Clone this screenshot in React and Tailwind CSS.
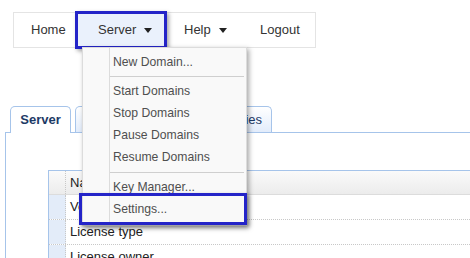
export default function App() {
  const caret = (
    <span className="inline-block w-0 h-0 border-l-[4px] border-r-[4px] border-t-[5px] border-l-transparent border-r-transparent border-t-[#222]" />
  );
  const item = "h-[22px] flex items-center pl-[30px]";
  return (
    <div className="relative w-[470px] h-[258px] overflow-hidden bg-white font-['Liberation_Sans',Arial,sans-serif]">
      {/* Nav bar */}
      <nav className="ml-[13px] mt-[12px] w-[303px] h-[36px] border border-[#e4e4e4] flex items-stretch text-[13px] text-[#333]">
        <div className="w-[61px] pl-[17px] flex items-center">Home</div>
        <div className="relative w-[92px] flex items-center">
          <span className="absolute left-0 top-[-2px] w-[92px] h-[38px] border-[3px] border-[#2424c8] bg-[#eaf1fc] shadow-[2px_2px_4px_rgba(0,0,0,0.35)]" />
          <span className="relative pl-[23px] flex items-center gap-[8px]">
            Server {caret}
          </span>
        </div>
        <div className="w-[76px] pl-[17px] flex items-center gap-[8px]">
          Help {caret}
        </div>
        <div className="pl-[17px] flex items-center">Logout</div>
      </nav>

      {/* Tabs + panel */}
      <div className="ml-[5px] mt-[58px]">
        <div className="flex items-end gap-[4px] pl-[5px] h-[27px] border-b border-[#a6c4ea]">
          <div className="w-[61px] h-[27px] -mb-px bg-white border border-b-0 border-[#a6c4ea] rounded-t-[5px] flex items-center justify-center text-[13px] font-bold text-[#1d3a66]">
            Server
          </div>
          <div className="w-[84px] h-[26px] bg-gradient-to-b from-white to-[#e2ecfb] border border-b-0 border-[#a6c4ea] rounded-t-[5px] flex items-center justify-center text-[13px] text-[#1d3a66]">
            Domains
          </div>
          <div className="w-[109px] h-[26px] bg-gradient-to-b from-white to-[#e2ecfb] border border-b-0 border-[#a6c4ea] rounded-t-[5px] flex items-center justify-end pr-[9px] text-[13px] text-[#1d3a66]">
            Properties
          </div>
        </div>
        <div className="border-l border-[#a6c4ea] h-[130px] pl-[42px] pt-[37px]">
          <div className="border-l border-[#a6c4ea] text-[13px] text-[#222]">
            <div className="flex h-[25px] border-t border-b border-t-[#a6c4ea] border-b-[#dcdcdc] bg-gradient-to-b from-[#fafafa] to-[#ececec]">
              <div className="w-[17px] border-r border-dotted border-[#c8c8c8]" />
              <div className="pl-[4px] flex items-center">Name</div>
            </div>
            {["Version", "License type", "License owner"].map((t) => (
              <div key={t} className="flex h-[25px] border-b border-dotted border-[#c8c8c8]">
                <div className="w-[17px] bg-[#e3ecf9] border-r border-dotted border-[#c8c8c8]" />
                <div className="pl-[4px] flex items-center">{t}</div>
              </div>
            ))}
          </div>
        </div>
      </div>

      {/* Dropdown menu */}
      <div className="absolute left-[82px] top-[47px] w-[165px] bg-[#f9f9f9] border border-[#dcdcdc] shadow-[2px_2px_5px_rgba(0,0,0,0.35)] text-[12.2px] text-[#4f4f4f] pt-[3px] pb-[5px]">
        <div className="absolute left-[26px] top-0 bottom-0 w-px bg-[#dcdcdc]" />
        <div className={item}>New Domain...</div>
        <div className="h-[7px] pt-[3px] pl-[27px] pr-[2px]">
          <div className="h-px bg-[#cfcfcf]" />
        </div>
        <div className={item}>Start Domains</div>
        <div className={item}>Stop Domains</div>
        <div className={item}>Pause Domains</div>
        <div className={item}>Resume Domains</div>
        <div className="h-[8px] pt-[4px] pl-[27px] pr-[2px]">
          <div className="h-px bg-[#cfcfcf]" />
        </div>
        <div className={item}>Key Manager...</div>
        <div className={item}>Settings...</div>
      </div>

      {/* Settings highlight */}
      <div className="absolute left-[79px] top-[193px] w-[168px] h-[32px] border-[3px] border-[#2424c8] shadow-[2px_2px_4px_rgba(0,0,0,0.35)]" />
    </div>
  );
}
